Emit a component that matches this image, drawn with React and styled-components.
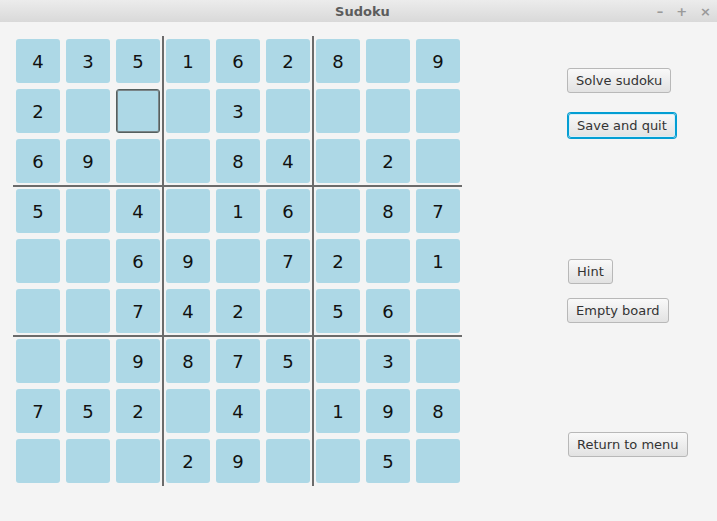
import React from 'react';
import styled, { createGlobalStyle } from 'styled-components';

const GlobalStyle = createGlobalStyle`
  html, body {
    margin: 0;
    padding: 0;
    background: #f4f4f4;
  }
  body {
    font-family: 'DejaVu Sans', 'Liberation Sans', sans-serif;
  }
`;

const BOARD = [
  [4, 3, 5, 1, 6, 2, 8, 0, 9],
  [2, 0, 0, 0, 3, 0, 0, 0, 0],
  [6, 9, 0, 0, 8, 4, 0, 2, 0],
  [5, 0, 4, 0, 1, 6, 0, 8, 7],
  [0, 0, 6, 9, 0, 7, 2, 0, 1],
  [0, 0, 7, 4, 2, 0, 5, 6, 0],
  [0, 0, 9, 8, 7, 5, 0, 3, 0],
  [7, 5, 2, 0, 4, 0, 1, 9, 8],
  [0, 0, 0, 2, 9, 0, 0, 5, 0],
];

const Window = styled.div`
  width: 717px;
  height: 521px;
  display: flex;
  flex-direction: column;
  background: #f4f4f4;
  overflow: hidden;
`;

const TitleBar = styled.div`
  height: 22px;
  flex: none;
  position: relative;
  display: flex;
  align-items: center;
  justify-content: center;
  background: linear-gradient(#ececec, #d9d9d9);
`;

const Title = styled.span`
  font-size: 13px;
  font-weight: 700;
  color: #5c5c5c;
  margin-left: 8px;
`;

const WindowControls = styled.div`
  position: absolute;
  right: 6px;
  top: 0;
  height: 22px;
  display: flex;
  align-items: center;
  gap: 13px;
  font-size: 13px;
  font-weight: 700;
  color: #9a9a9a;
`;

const Content = styled.div`
  flex: 1;
  display: flex;
  align-items: flex-start;
  padding: 17px 0 0 16px;
`;

const BoardWrap = styled.div`
  position: relative;
`;

const Grid = styled.div`
  display: grid;
  grid-template-columns: repeat(9, 44px);
  grid-auto-rows: 44px;
  gap: 6px;
`;

const Cell = styled.div`
  box-sizing: border-box;
  display: flex;
  align-items: center;
  justify-content: center;
  background: #add8e6;
  border-radius: 3px;
  border: ${p => (p.$selected ? '1px solid #55605f' : 'none')};
  box-shadow: ${p => (p.$selected ? 'inset 0 0 0 1px #7a8589' : 'none')};
  font-size: 18px;
  color: #111;
`;

const VLine = styled.div`
  position: absolute;
  top: -3px;
  bottom: -3px;
  width: 2px;
  background: #6b6b6b;
`;

const HLine = styled.div`
  position: absolute;
  left: -3px;
  right: -2px;
  height: 2px;
  background: #6b6b6b;
`;

const Side = styled.div`
  display: flex;
  flex-direction: column;
  align-items: flex-start;
  margin-left: 107px;
`;

const Button = styled.button`
  box-sizing: border-box;
  height: 25px;
  margin-top: ${p => p.$top}px;
  margin-left: ${p => p.$left || 0}px;
  padding: 0 8px;
  font-family: 'DejaVu Sans', 'Liberation Sans', sans-serif;
  font-size: 13px;
  color: #333;
  background: linear-gradient(#f9f9f9, #e2e2e2);
  border: 1px solid #b8b8b8;
  border-radius: 3px;
  box-shadow: ${p =>
    p.$focused ? '0 0 0 1px #039ed3, inset 0 0 0 1px #d6eef8' : 'none'};
  ${p => (p.$focused ? 'border-color: #039ed3;' : '')}
`;

const App = () => (
  <Window>
    <GlobalStyle />
    <TitleBar>
      <Title>Sudoku</Title>
      <WindowControls>
        <span>–</span>
        <span>+</span>
        <span>×</span>
      </WindowControls>
    </TitleBar>
    <Content>
      <BoardWrap>
        <Grid>
          {BOARD.map((row, r) =>
            row.map((v, c) => (
              <Cell key={`${r}-${c}`} $selected={r === 1 && c === 2}>
                {v || ''}
              </Cell>
            ))
          )}
        </Grid>
        <VLine style={{ left: 146 }} />
        <VLine style={{ left: 296 }} />
        <HLine style={{ top: 146 }} />
        <HLine style={{ top: 296 }} />
      </BoardWrap>
      <Side>
        <Button $top={29} $left={0}>Solve sudoku</Button>
        <Button $top={20} $left={1} $focused>Save and quit</Button>
        <Button $top={121} $left={1}>Hint</Button>
        <Button $top={14} $left={0}>Empty board</Button>
        <Button $top={109} $left={1}>Return to menu</Button>
      </Side>
    </Content>
  </Window>
);

export default App;
